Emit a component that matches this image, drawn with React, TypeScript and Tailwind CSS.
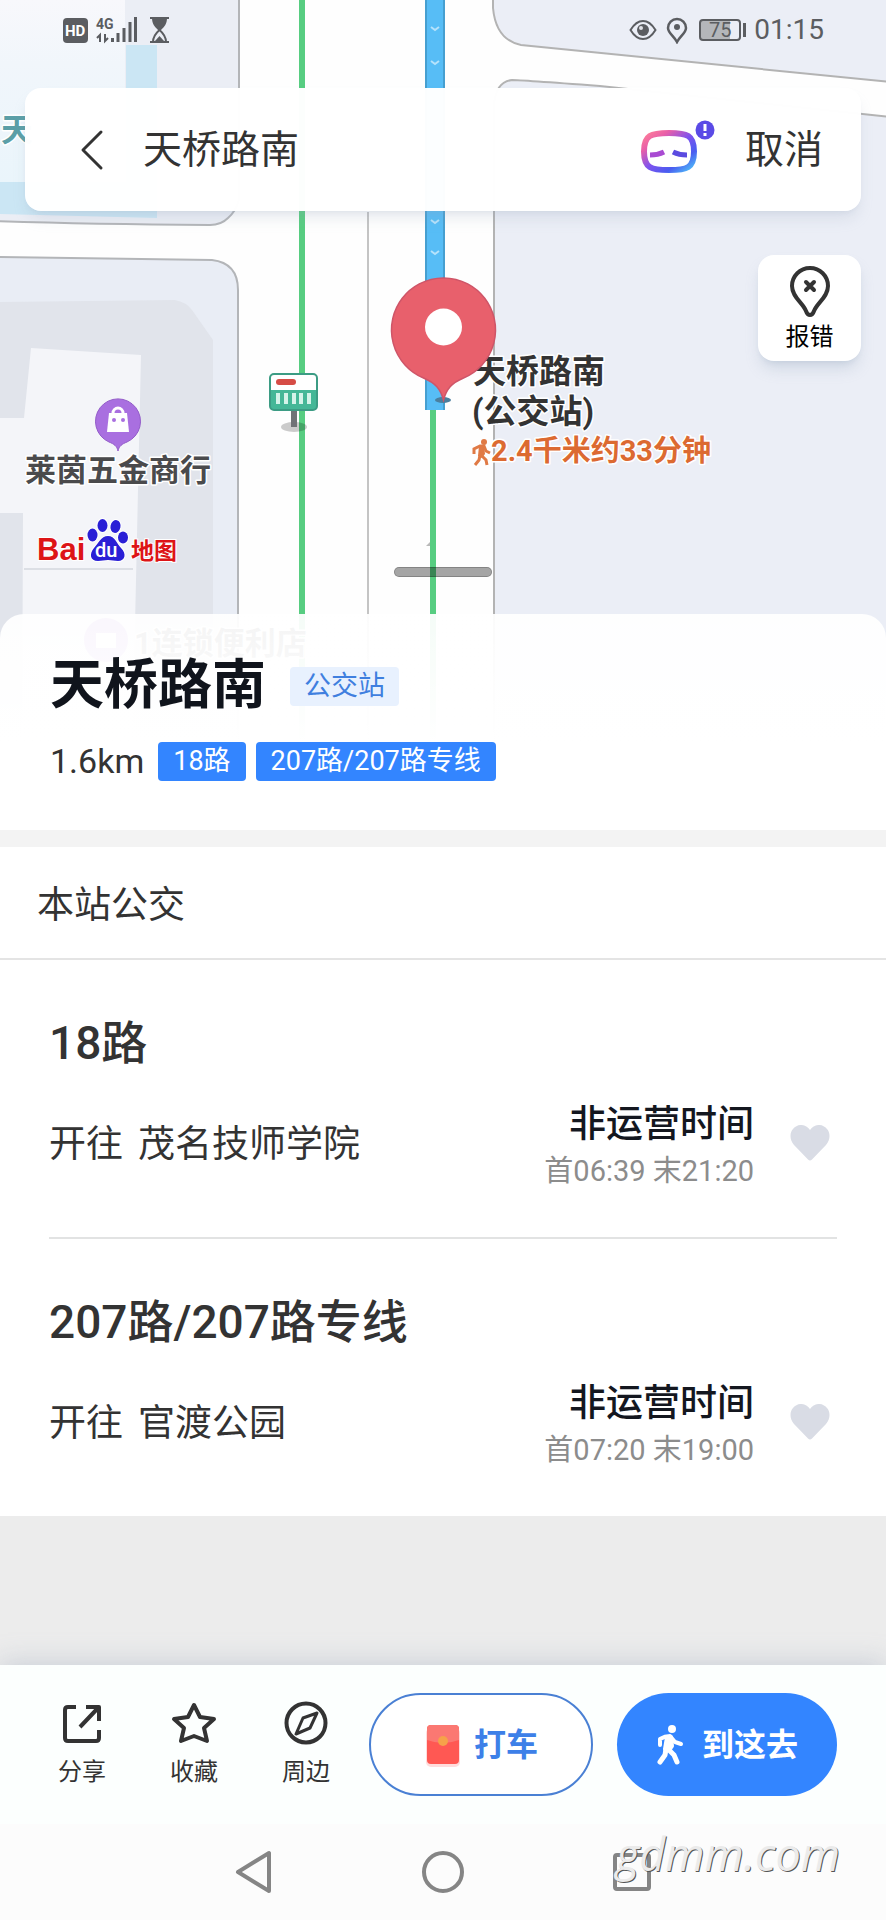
import { useState } from 'react'
import clsx from 'clsx'

interface BusLine {
  name: string
  destination: string
  first: string
  last: string
}

const lines: Array<BusLine> = [
  { name: '18路', destination: '茂名技师学院', first: '06:39', last: '21:20' },
  {
    name: '207路/207路专线',
    destination: '官渡公园',
    first: '07:20',
    last: '19:00',
  },
]

function MapCanvas() {
  return (
    <svg
      className="absolute inset-x-0 top-0 h-[760px] w-full"
      viewBox="0 0 886 760"
      preserveAspectRatio="xMidYMin slice"
      aria-hidden="true"
    >
      <defs>
        <linearGradient id="park" x1="0" y1="0" x2="0" y2="1">
          <stop offset="0" stopColor="#f8f8fc" />
          <stop offset="0.35" stopColor="#f1f6fb" />
          <stop offset="1" stopColor="#eaf5fb" />
        </linearGradient>
      </defs>
      <rect width="886" height="760" fill="#fefefe" />

      {/* blocks */}
      <path
        d="M-4 -4H239V200Q236 211 228 218Q221 225 210 225Q90 224 -4 221Z"
        fill="#ebeef5"
        stroke="#b3b5b8"
        strokeWidth="2"
      />
      <path d="M0 0H125V182H0Z" fill="url(#park)" />
      <path d="M126 45H157V218L0 214V182H126Z" fill="#cbe6f4" />
      <path
        d="M-4 257L212 260Q238 263 238 290V764H-4Z"
        fill="#e9edf5"
        stroke="#b3b5b8"
        strokeWidth="2"
      />
      <path d="M0 302L175 300Q186 302 192 310L213 340V760H0Z" fill="#e1e4eb" />
      <path
        d="M31 348L141 355L132 760H22L23 513H0V418H24Z"
        fill="#f4f5f9"
      />
      <path d="M24 569H133" stroke="#dcdfe5" strokeWidth="2" />
      <path
        d="M493 -4V8Q496 40 521 45L890 82V-4Z"
        fill="#ebeef6"
        stroke="#b3b3b3"
        strokeWidth="2"
      />
      <path
        d="M494 764V104Q496 82 512 80Q520 80 600 86L890 117V764Z"
        fill="#ebeef6"
        stroke="#b3b3b3"
        strokeWidth="2"
      />

      {/* roads */}
      <path d="M368 212V760" stroke="#c4c4c4" strokeWidth="2" />
      <path d="M302 0V760" stroke="#57cd81" strokeWidth="6" />
      <path d="M433 408V760" stroke="#57cd81" strokeWidth="6" />
      <path d="M425 0H445V410H425Z" fill="#57bdf6" />
      <path d="M426 0V410M444 0V410" stroke="#469fd0" strokeWidth="2" />
      <path
        d="M431 27l4 3 4-3M431 61l4 3 4-3M431 220l4 3 4-3M431 251l4 3 4-3"
        stroke="#b5e2fb"
        strokeWidth="2"
        fill="none"
      />
      <path d="M426 546l4-4v4z" fill="#b9b9b9" />

      {/* bus stop sign */}
      <ellipse cx="294" cy="427" rx="13" ry="5" fill="#000" opacity="0.2" />
      <path d="M291 408h6v19h-6z" fill="#707377" />
      <rect x="270" y="374" width="47" height="36" rx="4" fill="#fff" />
      <path d="M270 390h47v16q0 4-4 4h-39q-4 0-4-4z" fill="#45b797" />
      <rect
        x="270"
        y="374"
        width="47"
        height="36"
        rx="4"
        fill="none"
        stroke="#3c9c84"
        strokeWidth="2"
      />
      <rect x="276" y="379" width="20" height="6" rx="3" fill="#d64c46" />
      <path
        d="M278 393v11M286 393v11M294 393v11M301 393v11M309 393v11"
        stroke="#d5f3e9"
        strokeWidth="4"
      />

      {/* shop pin */}
      <path
        d="M118 451c-1-5-4-7-9-9a22.500 22.500 0 1 1 18 0c-5 2-8 4-9 9z"
        fill="#a96fe0"
        stroke="#935cc9"
      />
      <path d="M109 413h18l2 19h-22z" fill="#fff" />
      <path
        d="M113 414v-1a5 5 0 0 1 10 0v1"
        stroke="#fff"
        strokeWidth="3"
        fill="none"
      />
      <circle cx="114" cy="420" r="2" fill="#a96fe0" />
      <circle cx="123" cy="420" r="2" fill="#a96fe0" />

      {/* store pin that shows through the sheet */}
      <circle cx="106" cy="640" r="22" fill="#a96fe0" />
      <path d="M96 633h20v15h-20z" fill="#fff" />

      <g
        className="font-['Roboto','Noto_Sans_CJK_SC',sans-serif] font-bold"
        stroke="#fff"
        strokeWidth="3"
        strokeLinejoin="round"
        paintOrder="stroke"
      >
        <text x="1" y="141" fontSize="32" fill="#5b9fa7">
          天
        </text>
        <text x="25" y="481" fontSize="31" fill="#4a4a4c">
          莱茵五金商行
        </text>
        <text x="134" y="654" fontSize="31" fill="#4a4a4c">
          1连锁便利店
        </text>
        <text x="473" y="383" fontSize="33" fill="#333">
          天桥路南
        </text>
        <text x="472" y="423" fontSize="33" fill="#333">
          (公交站)
        </text>
        <text x="491" y="461" fontSize="29" fill="#dc6a31">
          2.4千米约33分钟
        </text>
      </g>

      {/* walking figure */}
      <circle cx="484" cy="442" r="3" fill="#e07a45" />
      <path d="M479 446h5l1 8-3 4-4-2z" fill="#e07a45" />
      <path
        d="M474 454v-5l6-3h4l2 5 4 2M480 455l-1 5-4 5M482 456l4 4 1 5"
        fill="none"
        stroke="#e07a45"
        strokeWidth="3"
      />

      {/* selected place */}
      <ellipse cx="443" cy="400" rx="8" ry="3" fill="#4b7f9f" />
      <path
        d="M443.500 400c-3-11-8-17-20-22a52 52 0 1 1 40 0c-12 5-17 11-20 22z"
        fill="#e8606c"
        stroke="#cf5568"
        strokeWidth="1.500"
      />
      <circle cx="443.500" cy="327" r="18.500" fill="#fff" />

      {/* baidu logo */}
      <g stroke="#fff" strokeWidth="2" paintOrder="stroke">
        <text
          x="37"
          y="560"
          fontSize="31"
          fill="#dd1417"
          className="font-['Liberation_Sans',sans-serif] font-bold"
        >
          Bai
        </text>
        <g fill="#2a1fd6">
          <ellipse cx="92.500" cy="535" rx="5" ry="6.500" />
          <ellipse cx="102.500" cy="525.500" rx="5" ry="6.500" />
          <ellipse
            cx="115.500"
            cy="526.500"
            rx="5"
            ry="6.500"
            transform="rotate(12 115.500 526.500)"
          />
          <ellipse cx="123" cy="537.500" rx="5" ry="6" />
          <path d="M108 536c7 0 9 8 13 12 6 6 4 13-3 13-4 0-6-1-10-1s-6 1-10 1c-8 0-9-7-4-13 4-4 7-12 14-12z" />
        </g>
        <text
          x="131"
          y="559"
          fontSize="23"
          fill="#dd1417"
          className="font-['Noto_Sans_CJK_SC',sans-serif] font-bold"
        >
          地图
        </text>
      </g>
      <text
        x="95"
        y="557"
        fontSize="20"
        fill="#fff"
        className="font-['Roboto',sans-serif] font-medium"
      >
        du
      </text>
    </svg>
  )
}

function StatusBar() {
  return (
    <div className="relative flex h-[60px] items-center justify-between px-[62px] text-[#5b5d61]">
      <svg width="108" height="28" viewBox="0 0 108 28" aria-hidden="true">
        <rect x="1" y="2" width="25" height="25" rx="4" fill="currentColor" />
        <g className="font-['Roboto',sans-serif] font-bold">
          <text x="3" y="20" fontSize="15" fill="#fff">
            HD
          </text>
          <text x="34" y="13" fontSize="14" fill="currentColor">
            4G
          </text>
        </g>
        <path
          d="M38 26v-7l-3 3M43 18v7l3-3"
          fill="none"
          stroke="currentColor"
          strokeWidth="2"
        />
        <path
          d="M50.500 26v-4M56 26v-9M62 26V12M68 26V6M73.500 26V1"
          stroke="currentColor"
          strokeWidth="3"
        />
        <path
          d="M88 2h19M88 26h19"
          stroke="currentColor"
          strokeWidth="2"
          fill="none"
        />
        <path
          d="M90 2h15c0 6-3 9-6 12h-3c-3-3-6-6-6-12z"
          fill="currentColor"
        />
        <path
          d="M91 26c0-5 3-9 6.500-12 3.500 3 6.500 7 6.500 12"
          fill="none"
          stroke="currentColor"
          strokeWidth="2"
        />
        <path d="M93 25l4.500-5 4.500 5z" fill="currentColor" />
      </svg>
      <div className="flex items-center">
        <svg width="28" height="28" viewBox="0 0 28 28" aria-hidden="true">
          <path
            d="M1.500 14Q7 5 14 5t12.500 9Q21 23 14 23T1.500 14z"
            fill="none"
            stroke="currentColor"
            strokeWidth="2"
          />
          <circle cx="14" cy="14" r="6" fill="currentColor" />
          <circle cx="12" cy="12" r="2" fill="#dfe1e6" />
        </svg>
        <svg
          className="ml-2"
          width="24"
          height="28"
          viewBox="0 0 24 28"
          aria-hidden="true"
        >
          <path
            d="M12 26C9 20 3 17 3 12a9 9 0 0 1 18 0c0 5-6 8-9 14z"
            fill="none"
            stroke="currentColor"
            strokeWidth="2.500"
          />
          <circle cx="12" cy="11" r="3" fill="currentColor" />
        </svg>
        <div className="ml-[10px] flex h-[22px] w-[42px] items-center justify-center rounded-sm border-2 border-[#5b5d61] bg-linear-to-r from-[#b4b6ba] from-75% to-transparent to-75% text-[20px] leading-none">
          75
        </div>
        <div className="ml-[2px] h-[14px] w-[3px] bg-[#5b5d61]" />
        <div className="ml-2 text-[28px] leading-8">01:15</div>
      </div>
    </div>
  )
}

function AssistantIcon() {
  return (
    <svg width="78" height="54" viewBox="0 0 78 54" aria-hidden="true">
      <defs>
        <linearGradient id="ring" x1="0" y1="0" x2="1" y2="1">
          <stop offset="0" stopColor="#ff7f98" />
          <stop offset="0.22" stopColor="#e95fa8" />
          <stop offset="0.5" stopColor="#7f53ee" />
          <stop offset="0.75" stopColor="#4a5cf0" />
          <stop offset="1" stopColor="#4fc4f9" />
        </linearGradient>
      </defs>
      <path
        d="M32 14c18 0 25 2 25 18.500S50 51 32 51 7 49 7 32.500 14 14 32 14z"
        fill="none"
        stroke="url(#ring)"
        strokeWidth="6"
      />
      <path d="M13 36q8 0 14-3" stroke="#a94bd2" strokeWidth="5" fill="none" />
      <path d="M36 33q6 3 14 3" stroke="#5b4be0" strokeWidth="5" fill="none" />
      <circle cx="68" cy="11" r="9.500" fill="#5a4ae6" />
      <path d="M68 5v7M68 14v3" stroke="#fff" strokeWidth="3" />
    </svg>
  )
}

function SearchBar() {
  return (
    <form
      className="relative mx-[25px] mt-7 flex h-[123px] items-center rounded-2xl bg-white/98 pr-[38px] pl-12 text-[39px] text-[#333] shadow-lg shadow-slate-400/20"
      onSubmit={(event) => event.preventDefault()}
    >
      <button type="button" aria-label="返回">
        <svg width="40" height="44" viewBox="0 0 40 44" aria-hidden="true">
          <path
            d="M28 4L10 22l18 18"
            fill="none"
            stroke="#333"
            strokeWidth="3"
            strokeLinecap="round"
            strokeLinejoin="round"
          />
        </svg>
      </button>
      <input
        type="text"
        aria-label="搜索地点"
        defaultValue="天桥路南"
        className="ml-[30px] min-w-0 flex-1 bg-transparent leading-[56px] outline-hidden"
      />
      <button type="button" aria-label="语音助手" className="mr-[30px] mb-2">
        <AssistantIcon />
      </button>
      <button type="button" className="leading-[56px]">
        取消
      </button>
    </form>
  )
}

function ReportButton() {
  return (
    <button
      type="button"
      className="relative mt-11 mr-[25px] flex h-[106px] w-[103px] flex-col items-center self-end rounded-2xl bg-white pt-[10px] text-black shadow-lg shadow-slate-400/30"
    >
      <svg width="44" height="52" viewBox="0 0 44 52" aria-hidden="true">
        <path
          d="M22 50c-2 0-3-1-4-4-3-8-14-14-14-25a18 18 0 0 1 36 0c0 11-11 17-14 25-1 3-2 4-4 4z"
          fill="none"
          stroke="#333"
          strokeWidth="4"
        />
        <path
          d="M18 17l8 8M26 17l-8 8"
          stroke="#333"
          strokeWidth="4"
          strokeLinecap="round"
        />
      </svg>
      <span className="text-[24px] leading-10">报错</span>
    </button>
  )
}

function PlaceSummary() {
  return (
    <section className="px-[50px] pt-9 pb-[49px]">
      <div className="flex items-center gap-6">
        <h1 className="text-[54px] leading-[72px] font-bold text-[#10141c]">
          天桥路南
        </h1>
        <span className="rounded-sm bg-[#e8f1fe] px-[14px] text-[27px] leading-[39px] text-[#3f7fdf]">
          公交站
        </span>
      </div>
      <div className="mt-5 flex items-center gap-[10px] text-[27px] leading-[39px]">
        <span className="mr-1 text-[34px] text-[#333]">1.6km</span>
        {lines.map((line) => (
          <span
            key={line.name}
            className="rounded-sm bg-[#3385ff] px-[15px] text-white"
          >
            {line.name}
          </span>
        ))}
      </div>
    </section>
  )
}

function LineItem({ line, divided }: { line: BusLine; divided: boolean }) {
  let [liked, setLiked] = useState(false)

  return (
    <li
      className={clsx(
        'mx-[49px] pt-[55px] pb-11',
        divided && 'border-b-2 border-[#e2e3e3]',
      )}
    >
      <h3 className="text-[46px] leading-[56px] font-medium text-[#333]">
        {line.name}
      </h3>
      <div className="mt-[26px] flex items-center">
        <p className="flex flex-1 gap-[15px] text-[37px] leading-[50px] text-[#333]">
          <span>开往</span>
          <span>{line.destination}</span>
        </p>
        <div className="text-right">
          <p className="pt-1 text-[37px] leading-[48px] font-medium text-[#14171f]">
            非运营时间
          </p>
          <p className="text-[29px] leading-[44px] text-[#8c8c8c]">
            首{line.first} 末{line.last}
          </p>
        </div>
        <button
          type="button"
          aria-label="收藏线路"
          aria-pressed={liked}
          onClick={() => setLiked(!liked)}
          className={clsx(
            'mr-[7px] mb-1 ml-[36px]',
            liked ? 'text-[#ff5a5f]' : 'text-[#d9dce5]',
          )}
        >
          <svg width="40" height="36" viewBox="0 0 40 36" aria-hidden="true">
            <path
              d="M18 34.500L4 20C-1 14 0 7 3 4c5-6 13-5 17 1 4-6 12-7 17-1 3 3 4 10-1 16L22 34.500q-2 2-4 0z"
              fill="currentColor"
            />
          </svg>
        </button>
      </div>
    </li>
  )
}

function ActionButton({
  label,
  children,
}: {
  label: string
  children: React.ReactNode
}) {
  return (
    <button type="button" className="flex w-[112px] flex-col items-center">
      <svg
        width="48"
        height="48"
        viewBox="0 0 48 48"
        fill="none"
        stroke="#333"
        strokeWidth="4"
        strokeLinejoin="round"
        aria-hidden="true"
      >
        {children}
      </svg>
      <span className="mt-2 text-[24px] leading-8 text-[#333]">{label}</span>
    </button>
  )
}

function ActionBar() {
  return (
    <div className="relative flex items-start bg-[#fcfffe] pt-7 pr-[49px] pb-7 pl-[26px] shadow-[0_-4px_24px_rgba(148,163,184,0.35)]">
      <div className="flex pt-[7px]">
        <ActionButton label="分享">
          <path d="M18 7H10q-3 0-3 3v28q0 3 3 3h28q3 0 3-3v-8M28 7h13v14M40 8L22 27" />
        </ActionButton>
        <ActionButton label="收藏">
          <path d="M24 5l6 12 14 2-10 9 3 13-13-5-13 5 3-13-10-9 14-2z" />
        </ActionButton>
        <ActionButton label="周边">
          <circle cx="24" cy="23" r="19.500" />
          <path d="M35 13L21 18l-7 16 14-6z" strokeWidth="3" />
        </ActionButton>
      </div>
      <div className="ml-[7px] flex flex-1 gap-6 text-[32px] font-bold">
        <button
          type="button"
          className="flex h-[103px] flex-1 items-center justify-center gap-3 rounded-full border-2 border-[#4a80d4] bg-white text-[#3d80e8]"
        >
          <svg width="38" height="44" viewBox="0 0 38 44" aria-hidden="true">
            <rect x="2" y="5" width="34" height="39" rx="5" fill="#ffdcdc" />
            <rect x="3" y="2" width="32" height="39" rx="4" fill="#ff5853" />
            <path
              d="M3 17V6q0-4 4-4h24q4 0 4 4v11q-16 6-32 0z"
              fill="#fb7872"
            />
            <circle cx="19" cy="18" r="5" fill="#f6a14a" />
          </svg>
          打车
        </button>
        <button
          type="button"
          className="flex h-[103px] flex-1 items-center justify-center gap-[18px] rounded-full bg-[#3385ff] text-white"
        >
          <svg
            width="28"
            height="42"
            viewBox="0 0 28 42"
            fill="none"
            stroke="#fff"
            strokeWidth="4"
            strokeLinecap="round"
            strokeLinejoin="round"
            aria-hidden="true"
          >
            <circle cx="16" cy="5" r="4" fill="#fff" stroke="none" />
            <path d="M4 21v-6q5-3 10-3l5 6 6 2" />
            <path d="M11 13h4l1 9-3 4-4-1z" fill="#fff" />
            <path d="M10 25l-1 6-5 7M13 26l5 5 3 7" strokeWidth="5" />
          </svg>
          到这去
        </button>
      </div>
    </div>
  )
}

function SystemNav() {
  return (
    <nav className="relative flex h-24 items-center justify-center gap-[147px] bg-[#fcfcfc]">
      <button type="button" aria-label="返回上一页">
        <svg width="40" height="44" viewBox="0 0 40 44" aria-hidden="true">
          <path
            d="M35 3v38L4 22z"
            fill="none"
            stroke="#858585"
            strokeWidth="4"
            strokeLinejoin="round"
          />
        </svg>
      </button>
      <button type="button" aria-label="主屏幕">
        <svg width="44" height="44" viewBox="0 0 44 44" aria-hidden="true">
          <circle
            cx="22"
            cy="22"
            r="19"
            fill="none"
            stroke="#858585"
            strokeWidth="4"
          />
        </svg>
      </button>
      <button type="button" aria-label="最近任务">
        <svg width="40" height="44" viewBox="0 0 40 44" aria-hidden="true">
          <rect
            x="3"
            y="5"
            width="34"
            height="34"
            rx="2"
            fill="none"
            stroke="#858585"
            strokeWidth="4"
          />
        </svg>
      </button>
      <span className="absolute top-0 right-[46px] font-['Open_Sans',sans-serif] text-[45px] leading-[60px] text-[#ebebeb] italic [text-shadow:1px_1px_0_#555]">
        gdmm.com
      </span>
    </nav>
  )
}

export default function App() {
  return (
    <div className="flex min-h-screen flex-col bg-[#ececec] font-['Roboto','Noto_Sans_CJK_SC',sans-serif]">
      <header className="relative flex h-[614px] flex-col">
        <MapCanvas />
        <StatusBar />
        <SearchBar />
        <ReportButton />
        <div className="absolute bottom-[37px] left-1/2 h-[10px] w-[98px] -translate-x-1/2 rounded-full border border-black/20 bg-black/35" />
      </header>
      <main className="relative">
        <div className="rounded-t-3xl bg-linear-to-b from-white/94 to-white to-60%">
          <PlaceSummary />
        </div>
        <section className="border-t-[17px] border-[#f3f3f3] bg-white">
          <h2 className="border-b-2 border-[#e4e4e4] px-[37px] pt-[31px] pb-[25px] text-[37px] leading-[55px] text-[#333]">
            本站公交
          </h2>
          <ul>
            {lines.map((line, lineIndex) => (
              <LineItem
                key={line.name}
                line={line}
                divided={lineIndex < lines.length - 1}
              />
            ))}
          </ul>
        </section>
      </main>
      <footer className="mt-auto">
        <ActionBar />
        <SystemNav />
      </footer>
    </div>
  )
}
